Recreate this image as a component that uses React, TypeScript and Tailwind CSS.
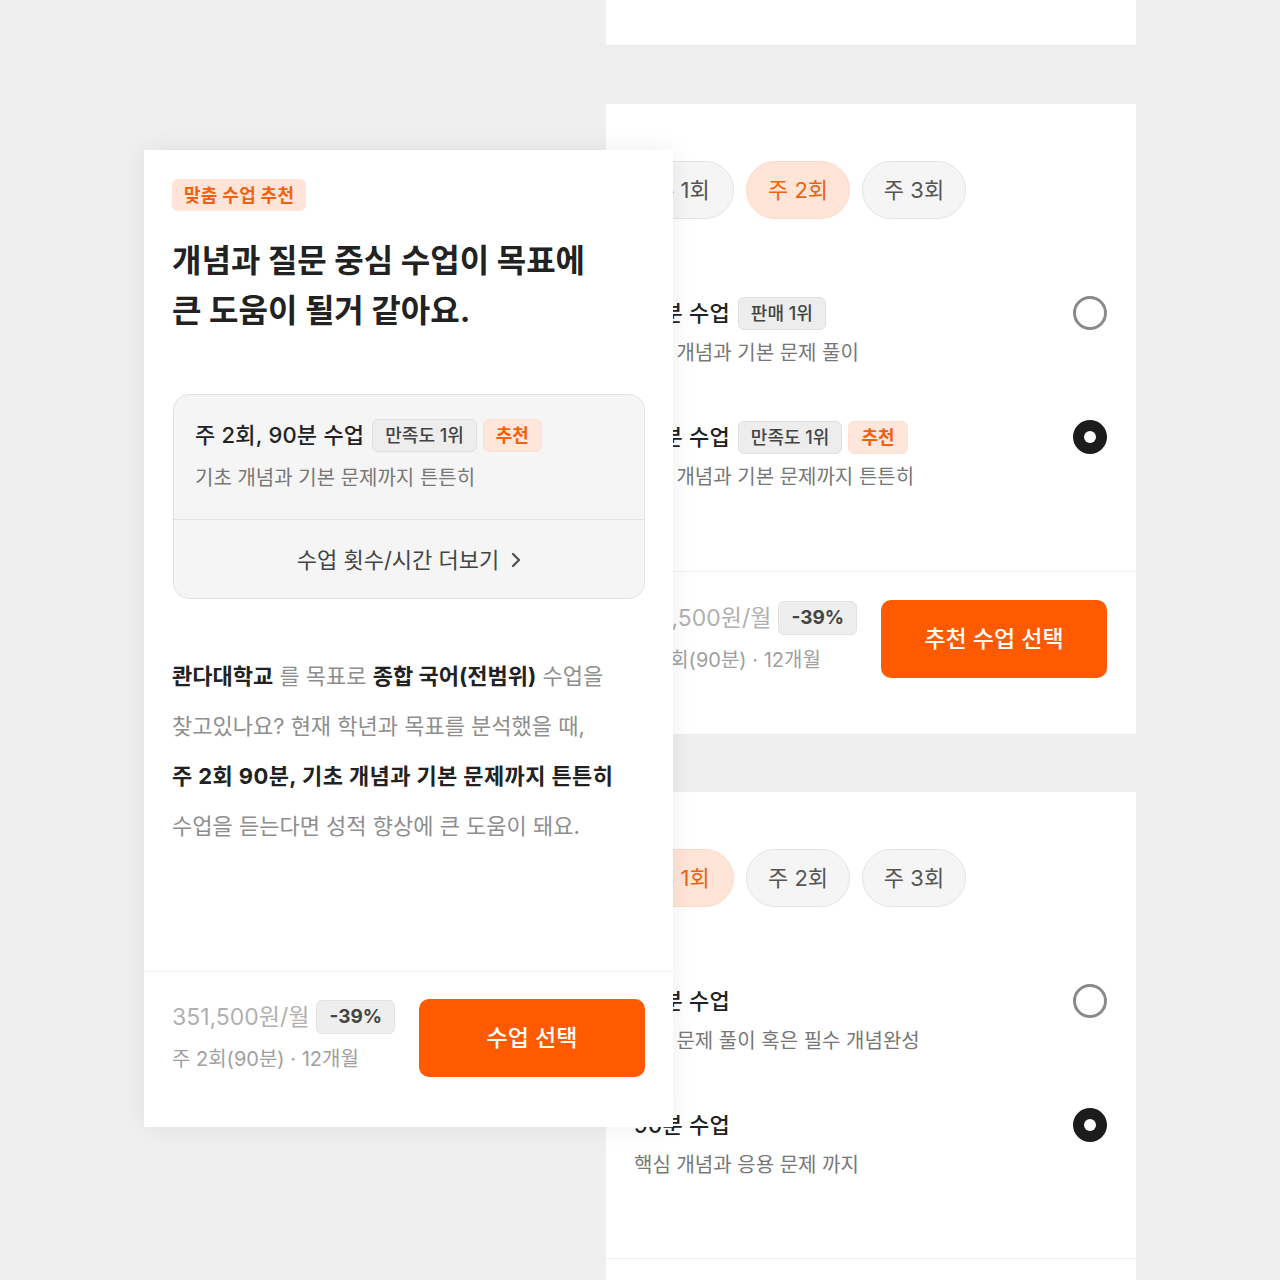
import React from "react";

function Radio({ checked }: { checked: boolean }) {
  return checked ? (
    <div className="w-[34px] h-[34px] rounded-full bg-[#1c1c1c] flex items-center justify-center shrink-0">
      <div className="w-[12px] h-[12px] rounded-full bg-white" />
    </div>
  ) : (
    <div className="w-[34px] h-[34px] rounded-full border-[3px] border-[#8a8a8a] bg-white shrink-0" />
  );
}

function Pill({ label, active }: { label: string; active?: boolean }) {
  return active ? (
    <div className="w-[104px] h-[58px] rounded-full border border-[#ffd9c6] bg-[#ffe5d8] flex items-center justify-center text-[22px] text-[#f0620f]">
      {label}
    </div>
  ) : (
    <div className="w-[104px] h-[58px] rounded-full border border-[#e4e4e4] bg-[#f5f5f5] flex items-center justify-center text-[22px] text-[#555]">
      {label}
    </div>
  );
}

function GrayBadge({ label }: { label: string }) {
  return (
    <span className="h-[33px] px-[12px] rounded-[6px] border border-[#e0e0e0] bg-[#ededed] flex items-center text-[18px] font-medium text-[#444]">
      {label}
    </span>
  );
}

function OrangeBadge({ label }: { label: string }) {
  return (
    <span className="h-[33px] px-[12px] rounded-[6px] border border-[#ffe0d0] bg-[#ffe6da] flex items-center text-[18px] font-bold text-[#f0620f]">
      {label}
    </span>
  );
}

function OptionRow({
  title,
  sub,
  checked,
  badges,
}: {
  title: string;
  sub: string;
  checked: boolean;
  badges?: React.ReactNode;
}) {
  return (
    <div className="flex justify-between items-start">
      <div className="flex flex-col">
        <div className="h-[34px] flex items-center gap-[6px]">
          <span className="text-[22px] font-medium text-[#222] mr-[2px] tracking-[0.2px]">{title}</span>
          {badges}
        </div>
        <div className="mt-[9px] h-[28px] leading-[28px] text-[20px] text-[#777]">{sub}</div>
      </div>
      <Radio checked={checked} />
    </div>
  );
}

function PriceBlock() {
  return (
    <div className="flex flex-col">
      <div className="h-[34px] flex items-center gap-[7px]">
        <span className="text-[23px] text-[#b0b0b0]">351,500원/월</span>
        <span className="h-[34px] px-[12px] rounded-[6px] border border-[#e2e2e2] bg-[#eeeeee] flex items-center text-[19px] font-bold text-[#444]">
          -39%
        </span>
      </div>
      <div className="mt-[11px] h-[28px] leading-[28px] text-[20px] text-[#a0a0a0]">주 2회(90분) · 12개월</div>
    </div>
  );
}

export default function App() {
  return (
    <div className="relative w-[1280px] h-[1280px] overflow-hidden bg-[#efefef] font-['Inter','Noto_Sans_CJK_KR',sans-serif]">
      {/* Right panel (behind) */}
      <div className="ml-[606px] w-[530px] flex flex-col gap-[58px]">
        <div className="h-[46px] bg-white border-b border-[#e8e8e8]" />

        {/* Section 1 */}
        <div className="h-[630px] bg-white flex flex-col">
          <div className="pt-[57px] pl-[24px] flex gap-[12px]">
            <Pill label="주 1회" />
            <Pill label="주 2회" active />
            <Pill label="주 3회" />
          </div>
          <div className="mt-[77px] px-[28px] pr-[29px] flex flex-col gap-[53px]">
            <OptionRow
              title="60분 수업"
              sub="기초 개념과 기본 문제 풀이"
              checked={false}
              badges={<GrayBadge label="판매 1위" />}
            />
            <OptionRow
              title="90분 수업"
              sub="기초 개념과 기본 문제까지 튼튼히"
              checked={true}
              badges={
                <>
                  <GrayBadge label="만족도 1위" />
                  <OrangeBadge label="추천" />
                </>
              }
            />
          </div>
          <div className="mt-[80px] border-t border-[#f0f0f0] px-[28px] pr-[29px] pt-[28px] flex justify-between items-start">
            <div className="pt-[1px]">
              <PriceBlock />
            </div>
            <button className="w-[226px] h-[78px] rounded-[10px] bg-[#ff5a00] text-white text-[23px] font-medium flex items-center justify-center">
              추천 수업 선택
            </button>
          </div>
        </div>

        {/* Section 2 */}
        <div className="h-[488px] bg-white flex flex-col">
          <div className="pt-[57px] pl-[24px] flex gap-[12px]">
            <Pill label="주 1회" active />
            <Pill label="주 2회" />
            <Pill label="주 3회" />
          </div>
          <div className="mt-[77px] px-[28px] pr-[29px] flex flex-col gap-[53px]">
            <OptionRow title="60분 수업" sub="기본 문제 풀이 혹은 필수 개념완성" checked={false} />
            <OptionRow title="90분 수업" sub="핵심 개념과 응용 문제 까지" checked={true} />
          </div>
          <div className="mt-[79px] border-t border-[#f0f0f0]" />
        </div>
      </div>

      {/* Left card (on top) */}
      <div className="absolute left-[144px] top-[150px] w-[529px] h-[977px] bg-white shadow-[0_0_24px_rgba(0,0,0,0.07)] flex flex-col">
        <div className="px-[28px] pt-[29px] flex flex-col">
          <span className="self-start h-[32px] px-[12px] rounded-[6px] bg-[#ffe4d7] flex items-center text-[18px] font-bold text-[#f0620f] tracking-[0.3px]">
            맞춤 수업 추천
          </span>
          <h1 className="mt-[25px] text-[32px] leading-[50px] font-bold text-[#222]">
            개념과 질문 중심 수업이 목표에
            <br />큰 도움이 될거 같아요.
          </h1>

          <div className="mt-[58px] ml-[1px] rounded-[16px] border border-[#e2e2e2] bg-[#f5f5f5] flex flex-col">
            <div className="pt-[23px] pb-[27px] px-[21px] flex flex-col">
              <div className="h-[34px] flex items-center gap-[6px]">
                <span className="text-[22px] font-medium text-[#222] mr-[2px] tracking-[0.2px]">주 2회, 90분 수업</span>
                <GrayBadge label="만족도 1위" />
                <OrangeBadge label="추천" />
              </div>
              <div className="mt-[12px] h-[28px] leading-[28px] text-[20px] text-[#777]">기초 개념과 기본 문제까지 튼튼히</div>
            </div>
            <div className="h-[79px] border-t border-[#e2e2e2] flex items-center justify-center gap-[12px] text-[22px] text-[#444] pt-[2px]">
              <span>수업 횟수/시간 더보기</span>
              <svg width="10" height="16" viewBox="0 0 10 16" fill="none">
                <path d="M2 2l6 6-6 6" stroke="#555" strokeWidth="2.4" strokeLinecap="round" strokeLinejoin="round" />
              </svg>
            </div>
          </div>

          <div className="mt-[52px] text-[22px] leading-[50px] text-[#8e8e8e]">
            <div>
              <span className="font-bold text-[#222]">콴다대학교</span> 를 목표로 <span className="font-bold text-[#222]">종합 국어(전범위)</span> 수업을
            </div>
            <div>찾고있나요? 현재 학년과 목표를 분석했을 때,</div>
            <div className="font-bold text-[#222] tracking-[0.4px]">주 2회 90분, 기초 개념과 기본 문제까지 튼튼히</div>
            <div>수업을 듣는다면 성적 향상에 큰 도움이 돼요.</div>
          </div>
        </div>

        <div className="mt-auto border-t border-[#f0f0f0] px-[28px] pt-[27px] pb-[50px] flex justify-between items-start">
          <div className="pt-[1px]">
            <PriceBlock />
          </div>
          <button className="w-[226px] h-[78px] rounded-[10px] bg-[#ff5a00] text-white text-[23px] font-medium flex items-center justify-center">
            수업 선택
          </button>
        </div>
      </div>
    </div>
  );
}
